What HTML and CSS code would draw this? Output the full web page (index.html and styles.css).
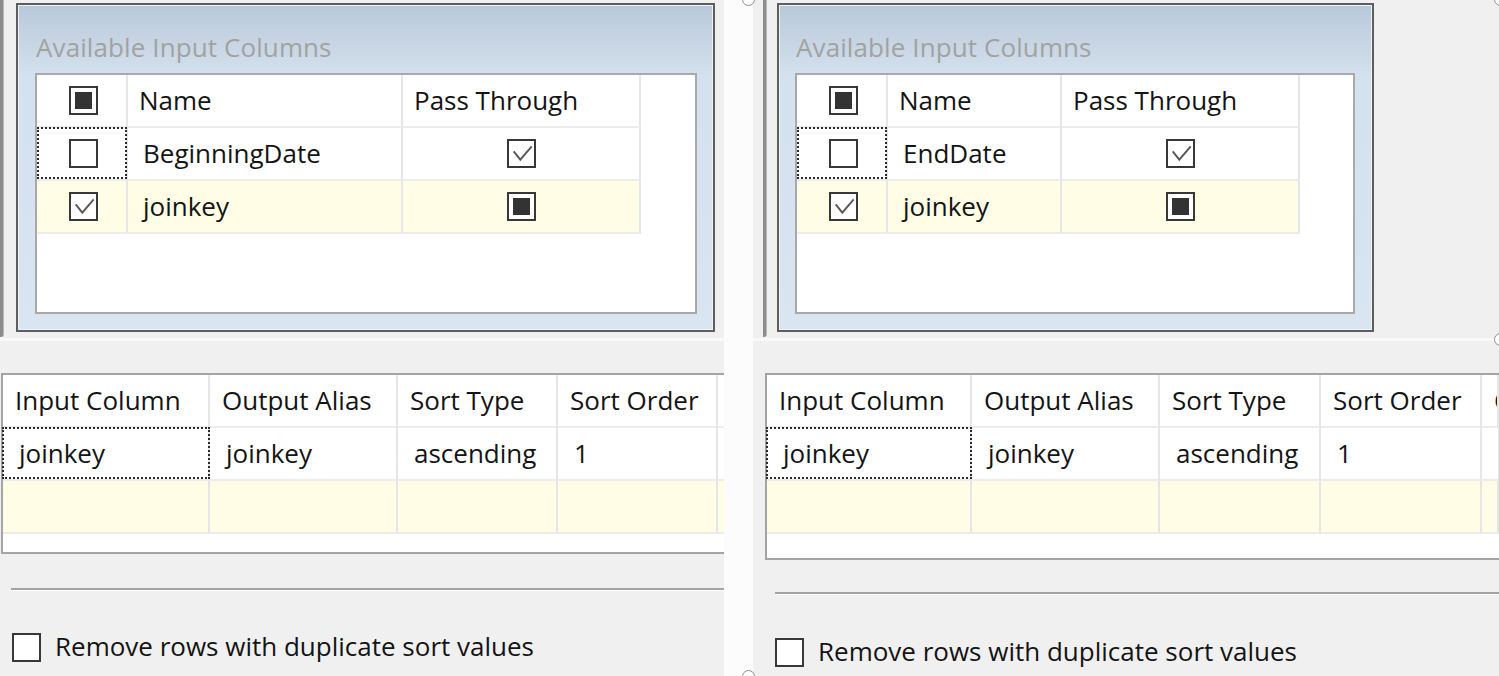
FILE: index.html
```html
<!DOCTYPE html>
<html lang="en">
<head>
<meta charset="utf-8">
<title>Sort Transformation Editor</title>
<link rel="stylesheet" href="styles.css">
</head>
<body>
<div class="screen">
  <section class="panel panel-left">
    <div class="upper">
      <div class="edge"></div>
      <div class="group">
        <div class="title">Available Input Columns</div>
        <div class="avail">
          <div class="row">
            <div class="cell c-chk"><span class="cb ind"></span></div>
            <div class="cell c-name head">Name</div>
            <div class="cell c-pass head">Pass Through</div>
          </div>
          <div class="row">
            <div class="cell c-chk focus"><span class="cb"></span></div>
            <div class="cell c-name data">BeginningDate</div>
            <div class="cell c-pass"><span class="cb"><svg class="tick" viewBox="0 0 25 25"><polyline points="4.7,10.3 11.3,18.7 22.7,5.3"/></svg></span></div>
          </div>
          <div class="row alt">
            <div class="cell c-chk"><span class="cb"><svg class="tick" viewBox="0 0 25 25"><polyline points="4.7,10.3 11.3,18.7 22.7,5.3"/></svg></span></div>
            <div class="cell c-name data">joinkey</div>
            <div class="cell c-pass"><span class="cb ind"></span></div>
          </div>
        </div>
      </div>
    </div>
    <div class="splitter"></div>
    <div class="sort">
      <div class="row">
        <div class="cell s1 head">Input Column</div>
        <div class="cell s2 head">Output Alias</div>
        <div class="cell s3 head">Sort Type</div>
        <div class="cell s4 head">Sort Order</div>
        <div class="cell s5 head"></div>
      </div>
      <div class="row">
        <div class="cell s1 data focus">joinkey</div>
        <div class="cell s2 data">joinkey</div>
        <div class="cell s3 data">ascending</div>
        <div class="cell s4 data">1</div>
        <div class="cell s5 data"></div>
      </div>
      <div class="row alt">
        <div class="cell s1"></div>
        <div class="cell s2"></div>
        <div class="cell s3"></div>
        <div class="cell s4"></div>
        <div class="cell s5"></div>
      </div>
    </div>
    <div class="rule"></div>
    <div class="option"><span class="cb"></span><span class="option-text">Remove rows with duplicate sort values</span></div>
  </section>

  <div class="strip"></div>

  <section class="panel panel-right">
    <div class="upper">
      <div class="edge"></div>
      <div class="group">
        <div class="title">Available Input Columns</div>
        <div class="avail">
          <div class="row">
            <div class="cell c-chk"><span class="cb ind"></span></div>
            <div class="cell c-name head">Name</div>
            <div class="cell c-pass head">Pass Through</div>
          </div>
          <div class="row">
            <div class="cell c-chk focus"><span class="cb"></span></div>
            <div class="cell c-name data">EndDate</div>
            <div class="cell c-pass"><span class="cb"><svg class="tick" viewBox="0 0 25 25"><polyline points="4.7,10.3 11.3,18.7 22.7,5.3"/></svg></span></div>
          </div>
          <div class="row alt">
            <div class="cell c-chk"><span class="cb"><svg class="tick" viewBox="0 0 25 25"><polyline points="4.7,10.3 11.3,18.7 22.7,5.3"/></svg></span></div>
            <div class="cell c-name data">joinkey</div>
            <div class="cell c-pass"><span class="cb ind"></span></div>
          </div>
        </div>
      </div>
    </div>
    <div class="splitter"></div>
    <div class="sort">
      <div class="row">
        <div class="cell s1 head">Input Column</div>
        <div class="cell s2 head">Output Alias</div>
        <div class="cell s3 head">Sort Type</div>
        <div class="cell s4 head">Sort Order</div>
        <div class="cell s5 head">Comparison Flags</div>
      </div>
      <div class="row">
        <div class="cell s1 data focus">joinkey</div>
        <div class="cell s2 data">joinkey</div>
        <div class="cell s3 data">ascending</div>
        <div class="cell s4 data">1</div>
        <div class="cell s5 data"></div>
      </div>
      <div class="row alt">
        <div class="cell s1"></div>
        <div class="cell s2"></div>
        <div class="cell s3"></div>
        <div class="cell s4"></div>
        <div class="cell s5"></div>
      </div>
    </div>
    <div class="rule"></div>
    <div class="option"><span class="cb"></span><span class="option-text">Remove rows with duplicate sort values</span></div>
  </section>

  <span class="handle h-top-mid"></span>
  <span class="handle h-bottom-mid"></span>
  <span class="handle h-top-right"></span>
  <span class="handle h-mid-right"></span>
</div>
</body>
</html>
```

FILE: styles.css
```css
* { box-sizing: border-box; }

html, body { margin: 0; padding: 0; }

body {
  width: 1499px;
  height: 676px;
  overflow: hidden;
  background: #f0f0f0;
  font-family: "Open Sans", "Noto Sans", sans-serif;
  font-size: 26px;
  color: #141414;
}

.screen {
  position: relative;
  display: flex;
  height: 676px;
}

.panel {
  flex: none;
  height: 676px;
  overflow: hidden;
}

.panel-left { width: 724px; }
.panel-right { width: 746px; }

.strip {
  flex: none;
  width: 29px;
  background: #fcfcfc;
}

/* ---------- upper group ---------- */
.upper {
  display: flex;
  align-items: flex-start;
  height: 338px;
}

.edge {
  flex: none;
  width: 4px;
  height: 337px;
  background: #8c8c8c;
  border-right: 1px solid #b8b8b8;
  border-bottom-right-radius: 3px;
}

.panel-right .edge { margin-left: 10px; }

.group {
  flex: none;
  margin-top: 3px;
  height: 329px;
  border: 2px solid #5e5e5e;
  box-shadow: inset 0 0 0 1px #eef2f7;
  background: linear-gradient(#b9c8d8 0, #d4e1ee 72px, #d9e5f1 100%);
  padding: 25px 16px 16px 17px;
}

.panel-left .group { margin-left: 12px; width: 699px; }
.panel-right .group { margin-left: 10px; width: 597px; padding-left: 16px; padding-right: 17px; }

.title {
  height: 35px;
  line-height: 35px;
  margin-bottom: 8px;
  padding-left: 1px;
  color: #a2a2a2;
  white-space: nowrap;
  letter-spacing: 0.1px;
}

.avail {
  height: 241px;
  border: 2px solid #a9a9a9;
  background: #fff;
}

.panel-left .avail { width: 662px; }
.panel-right .avail { width: 560px; }

/* ---------- rows / cells ---------- */
.row {
  display: flex;
  height: 53px;
}

.cell {
  flex: none;
  position: relative;
  display: flex;
  align-items: center;
  height: 53px;
  line-height: 35px;
  white-space: nowrap;
  overflow: hidden;
  border-right: 2px solid #e6e6e6;
  border-bottom: 2px solid #ececec;
  background: #fff;
}

.row.alt .cell { background: #fffde6; }

.cell.head { padding-left: 12px; }
.cell.data { padding-left: 16px; }

.avail .cell.head { padding-left: 11px; }
.avail .cell.data { padding-left: 15px; }

.c-chk { width: 91px; padding-left: 32px; }
.panel-left .c-name { width: 275px; }
.panel-right .c-name { width: 174px; }
.c-pass { width: 238px; justify-content: center; }
.c-pass.head { justify-content: flex-start; }

.focus { overflow: visible; }
.focus::after {
  content: "";
  position: absolute;
  top: -1px;
  left: 0;
  right: -1px;
  bottom: 0;
  border: 2px dotted #2a2a2a;
}

/* ---------- checkbox ---------- */
.cb {
  flex: none;
  display: inline-flex;
  align-items: center;
  justify-content: center;
  width: 29px;
  height: 29px;
  border: 2px solid #383838;
  background: #fff;
}

.cb.ind::before {
  content: "";
  width: 17px;
  height: 17px;
  background: #333;
}

.tick {
  width: 25px;
  height: 25px;
  fill: none;
  stroke: #585858;
  stroke-width: 1.9;
}

/* ---------- splitter ---------- */
.splitter {
  height: 3px;
  background: #f9f9f9;
}

/* ---------- sort grid ---------- */
.sort {
  width: 1000px;
  margin-top: 32px;
  border: 2px solid #a4a4a4;
  border-right: none;
  background: #fff;
}

.panel-left .sort { margin-left: 1px; height: 181px; }
.panel-right .sort { margin-left: 12px; height: 187px; width: 740px; }

.panel-left .s1 { width: 207px; }
.panel-right .s1 { width: 205px; }
.s2 { width: 188px; }
.panel-left .s3, .panel-left .s4 { width: 160px; }
.panel-right .s3, .panel-right .s4 { width: 161px; }
.s5 { width: 240px; }
.panel-right .s5 { width: 17px; padding-right: 0; }

.sort .focus::after { top: -1px; left: -1px; right: -2px; bottom: 0; }

/* ---------- rule + option ---------- */
.rule {
  height: 3px;
  border-top: 2px solid #a3a3a3;
  border-bottom: 1px solid #fdfdfd;
}

.panel-left .rule { margin: 34px 0 0 11px; }
.panel-right .rule { margin: 32px 0 0 22px; }

.option {
  display: flex;
  align-items: flex-start;
  white-space: nowrap;
}

.panel-left .option { margin: 42px 0 0 12px; }
.panel-right .option { margin: 43px 0 0 22px; }

.option-text {
  margin-top: -4px;
  margin-left: 14px;
  line-height: 35px;
}

/* ---------- screenshot handles ---------- */
.handle {
  position: absolute;
  width: 13px;
  height: 13px;
  border: 1.5px solid #8e8e8e;
  border-radius: 50%;
  background: #fff;
}

.h-top-mid { left: 742px; top: -7px; }
.h-bottom-mid { left: 742px; top: 670px; }
.h-top-right { left: 1494px; top: -7px; }
.h-mid-right { left: 1494px; top: 333px; }
```
